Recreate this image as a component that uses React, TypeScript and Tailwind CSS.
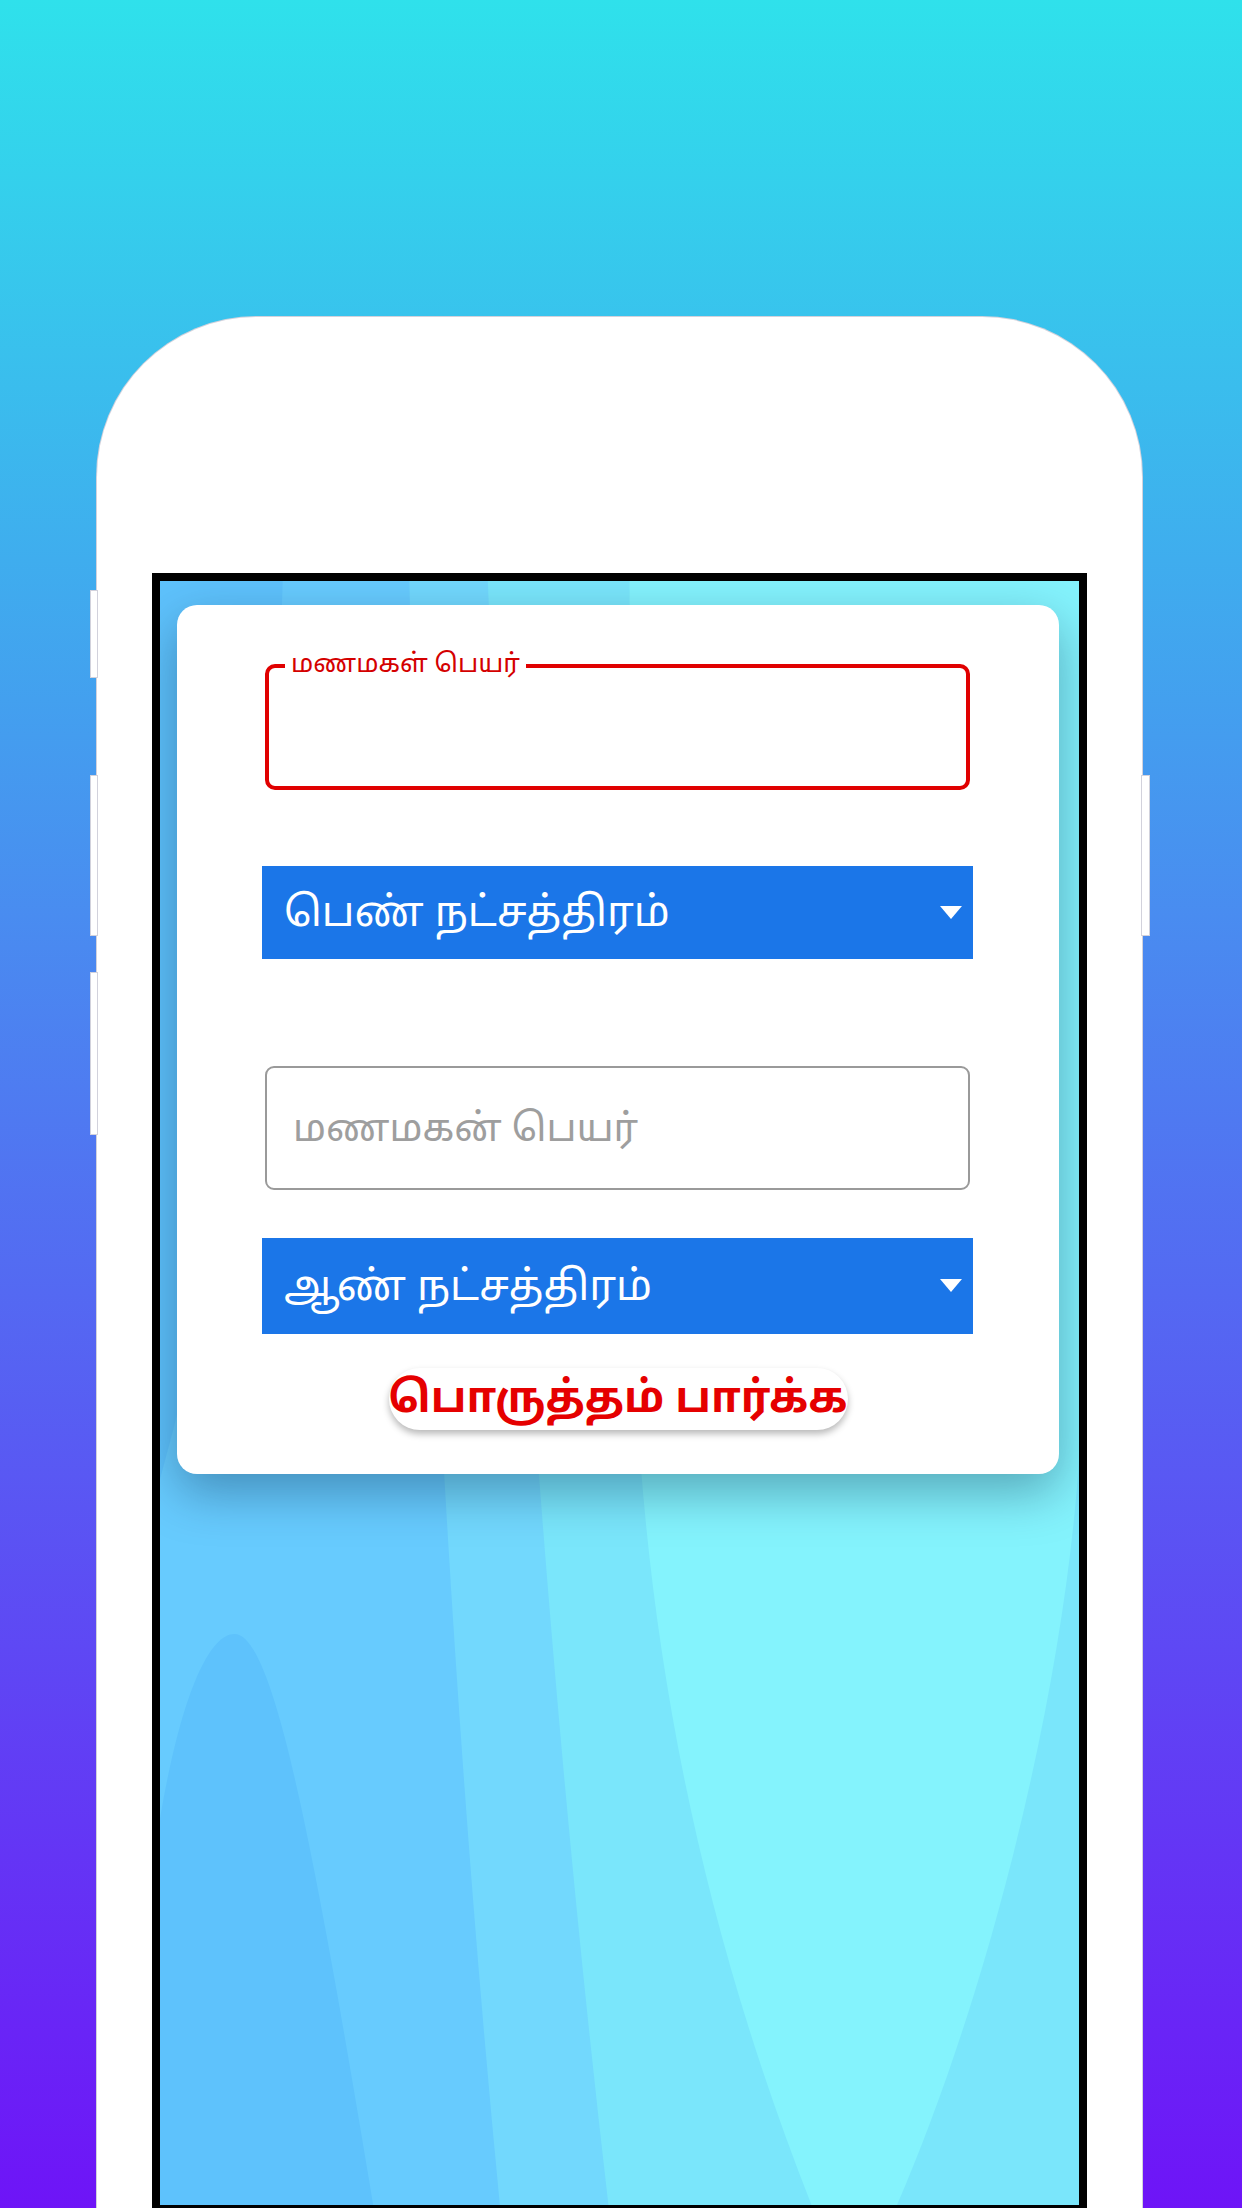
import React from 'react';

const tamil = '"Noto Sans Tamil UI", "Noto Sans Tamil", "Noto Sans", "Lohit Tamil", Roboto, sans-serif';

function ScreenWaves() {
    // background artwork of the phone screen, coordinates of the 914 x 1627 screen
    return (
        <svg
            className="absolute inset-0 w-full h-full"
            viewBox="0 0 914 1627"
            preserveAspectRatio="none"
        >
            <rect x="0" y="0" width="914" height="1627" fill="#67cbfe" />
            <path d="M0,0 L122,0 Q110,500 0,900 Z" fill="#5ec2fc" />
            <path d="M248,0 Q268,900 338,1627 L914,1627 L914,0 Z" fill="#72d8fd" />
            <path d="M326,0 Q362,900 446,1627 L914,1627 L914,0 Z" fill="#7ae6fb" />
            <path
                d="M467,0 L470,700 C474,1000 520,1300 648,1627 L733,1627 C830,1400 900,1100 914,880 L914,0 Z"
                fill="#84f3fd"
            />
            <path
                d="M0,1627 L0,1240 C20,1120 48,1055 74,1055 C112,1055 150,1250 212,1627 Z"
                fill="#5ec2fc"
            />
        </svg>
    );
}

function Dropdown({ label }: { label: string }) {
    return (
        <div className="flex items-center justify-between bg-[#1b76e8] pl-[22px] pr-[11px] h-full">
            <span
                className="pt-[7px] text-white text-[42px] leading-none whitespace-nowrap"
                style={{ fontFamily: tamil }}
            >
                {label}
            </span>
            <svg width="22" height="14" viewBox="0 0 22 14">
                <path d="M0,0 L22,0 L11,13 Z" fill="#ffffff" />
            </svg>
        </div>
    );
}

export default function App() {
    return (
        <div className="w-[1242px] h-[2208px] overflow-hidden bg-linear-to-b/srgb from-[#2fe1eb] to-[#6e14f7] pt-[317px]">
            {/* Phone body */}
            <div className="relative ml-[97px] w-[1045px] h-[1960px] bg-white rounded-t-[160px] shadow-[0_0_0_1px_#d2d2dc] pt-[256px] px-[55px]">
                {/* Side buttons */}
                <div className="absolute left-[-6px] top-[274px] w-[6px] h-[86px] bg-white shadow-[0_0_0_1px_#d2d2dc]" />
                <div className="absolute left-[-6px] top-[459px] w-[6px] h-[159px] bg-white shadow-[0_0_0_1px_#d2d2dc]" />
                <div className="absolute left-[-6px] top-[656px] w-[6px] h-[161px] bg-white shadow-[0_0_0_1px_#d2d2dc]" />
                <div className="absolute right-[-7px] top-[459px] w-[7px] h-[159px] bg-white shadow-[0_0_0_1px_#d2d2dc]" />

                {/* Screen */}
                <div className="h-[1635px] border-x-8 border-t-8 border-b-[3px] border-black">
                    <div className="relative h-full overflow-hidden">
                        <ScreenWaves />

                        {/* Form card */}
                        <div className="relative mt-[24px] ml-[17px] w-[882px] bg-white rounded-[20px] shadow-[0_18px_50px_rgba(0,30,60,0.35)] pt-[44px] pb-[44px] flex flex-col">
                            {/* Bride name (focused) */}
                            <fieldset className="ml-[88px] w-[705px] h-[141px] m-0 p-0 border-4 border-[#e00000] rounded-[10px]">
                                <legend
                                    className="ml-[16px] px-[6px] text-[26px] leading-[34px] text-[#d40000] whitespace-nowrap"
                                    style={{ fontFamily: tamil }}
                                >
                                    மணமகள் பெயர்
                                </legend>
                            </fieldset>

                            {/* Bride star */}
                            <div className="ml-[85px] w-[711px] h-[93px] mt-[76px]">
                                <Dropdown label="பெண் நட்சத்திரம்" />
                            </div>

                            {/* Groom name */}
                            <div className="ml-[88px] w-[705px] h-[124px] mt-[107px] border-2 border-[#9a9a9a] rounded-[9px] flex items-center pl-[26px]">
                                <span
                                    className="pt-[8px] text-[38.5px] leading-none text-[#9e9e9e] whitespace-nowrap"
                                    style={{ fontFamily: tamil }}
                                >
                                    மணமகன் பெயர்
                                </span>
                            </div>

                            {/* Groom star */}
                            <div className="ml-[85px] w-[711px] h-[96px] mt-[48px]">
                                <Dropdown label="ஆண் நட்சத்திரம்" />
                            </div>

                            {/* Check button */}
                            <div className="mt-[34px] flex justify-center">
                                <button className="h-[62px] w-[459px] bg-white rounded-full shadow-[0_4px_7px_rgba(0,0,0,0.28)] flex items-center justify-center">
                                    <span
                                        className="pt-[4px] text-[43px] leading-none font-bold text-[#e50000] whitespace-nowrap"
                                        style={{ fontFamily: tamil }}
                                    >
                                        பொருத்தம் பார்க்க
                                    </span>
                                </button>
                            </div>
                        </div>
                    </div>
                </div>
            </div>
        </div>
    );
}
